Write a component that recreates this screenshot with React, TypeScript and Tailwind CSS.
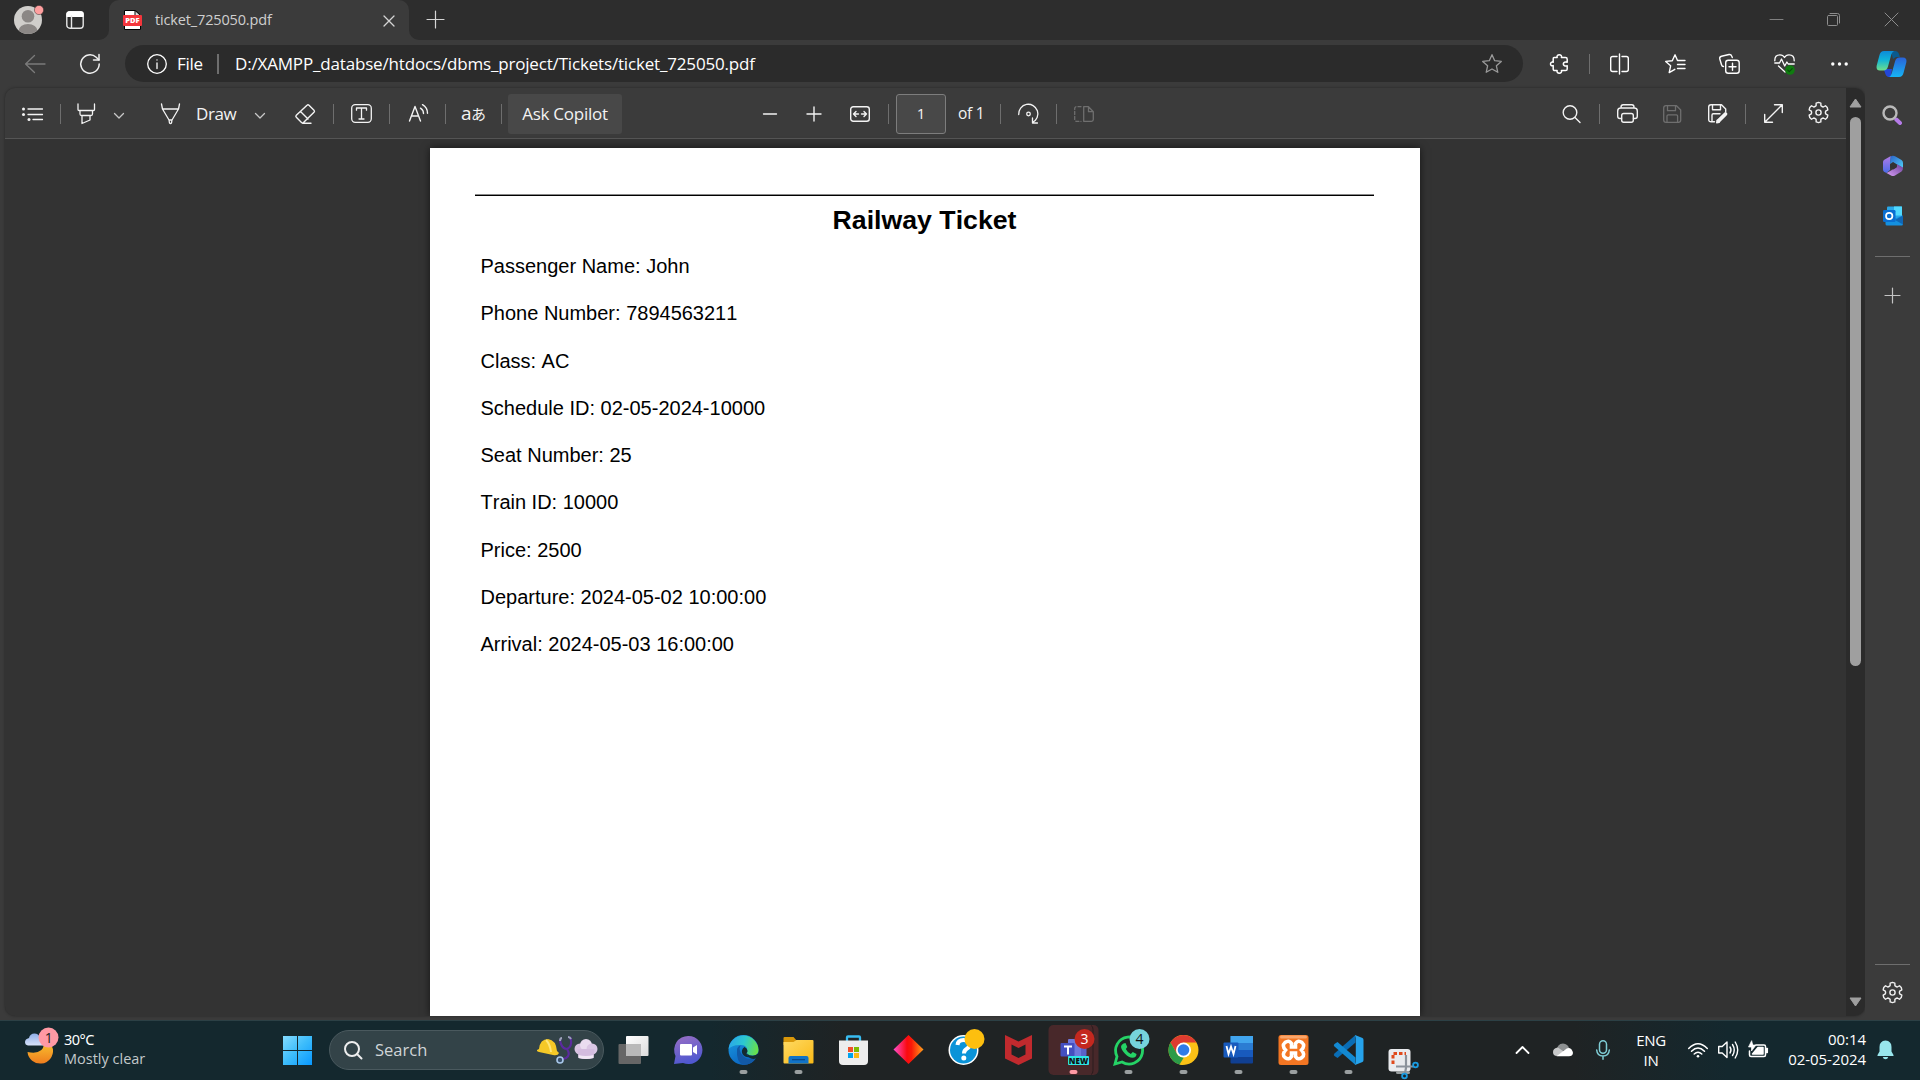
import type { ReactNode } from "react";

type IconProps = { w: number; h: number; className?: string; sw?: number; children: ReactNode };

/** Line icon whose view box is the same size as its box on the page. */
function Icon({ w, h, className = "", sw = 1.3, children }: IconProps) {
  return (
    <svg
      width={w}
      height={h}
      viewBox={`0 0 ${w} ${h}`}
      fill="none"
      stroke="currentColor"
      strokeWidth={sw}
      strokeLinecap="round"
      strokeLinejoin="round"
      className={`block shrink-0 overflow-visible ${className}`}
    >
      {children}
    </svg>
  );
}

function gearPath(c: number) {
  const pts: string[] = [];
  for (let k = 0; k < 6; k++) {
    const base = (k * 60 - 90) * (Math.PI / 180);
    const steps: [number, number][] = [
      [-19, 7.3],
      [-14, 9.7],
      [0, 10.1],
      [14, 9.7],
      [19, 7.3],
      [30, 6.9],
    ];
    for (const [deg, r] of steps) {
      const a = base + (deg * Math.PI) / 180;
      pts.push(`${(c + r * Math.cos(a)).toFixed(2)} ${(c + r * Math.sin(a)).toFixed(2)}`);
    }
  }
  return `M${pts.join("L")}Z`;
}

function Gear({ className = "" }: { className?: string }) {
  return (
    <Icon w={21} h={21} className={className} sw={1.4}>
      <path d={gearPath(10.5)} />
      <circle cx="10.5" cy="10.5" r="2.6" />
    </Icon>
  );
}

function Sep({ className }: { className: string }) {
  return <div className={`h-5 w-px shrink-0 bg-[#6e6e6e] ${className}`} />;
}

function TitleBar() {
  return (
    <div className="flex h-10 w-full items-center bg-[#2d2d2d]">
      <svg width="32" height="32" viewBox="0 0 32 32" className="ml-3.5 shrink-0">
        <defs>
          <clipPath id="avatar">
            <circle cx="14" cy="16" r="14" />
          </clipPath>
        </defs>
        <circle cx="14" cy="16" r="14" fill="#d0cecb" />
        <g clipPath="url(#avatar)" fill="#8b8785">
          <circle cx="14" cy="12.3" r="6.3" />
          <ellipse cx="14" cy="27" rx="9.5" ry="7" />
        </g>
        <circle cx="25" cy="6" r="4.6" fill="#ff9f9f" stroke="#3a3030" strokeWidth="0.5" />
      </svg>
      <Icon w={18} h={18} className="ml-5 text-[#e6e6e6]" sw={1.4}>
        <rect x="0.8" y="0.8" width="16.4" height="16.4" rx="3" />
        <path d="M1 4V3a2 2 0 0 1 2-2h12a2 2 0 0 1 2 2v2.2H1z" fill="#fff" stroke="#fff" />
        <path d="M5.5 5v12" />
      </Icon>
      <div className="ml-[15px] flex h-10 w-[320px] shrink-0 items-end">
        <div className="h-2.5 w-2.5 bg-[#3b3b3b]">
          <div className="h-full w-full rounded-br-[10px] bg-[#2d2d2d]" />
        </div>
        <div className="flex h-10 w-[300px] items-center rounded-t-[10px] bg-[#3b3b3b]">
          <svg width="19" height="20" viewBox="0 0 19 20" className="ml-3.5 shrink-0">
            <path d="M1.5 0.5h11l5 4.5v14.5h-16z" fill="#fff" stroke="#000" />
            <path d="M12 0.5v5h5.5z" fill="#ddd" stroke="#000" />
            <rect x="0" y="5" width="19" height="11" rx="1" fill="#f4353b" />
            <text x="9.5" y="13.3" textAnchor="middle" fontFamily="Open Sans, sans-serif" fontWeight="800" fontSize="7.500" fill="#fff">
              PDF
            </text>
          </svg>
          <span className="ml-[13px] w-[229px] whitespace-nowrap text-[14.5px] leading-5 tracking-[-0.15px] text-[#cfcfcf]">ticket_725050.pdf</span>
          <Icon w={10} h={10} className="mt-px text-[#d5d5d5]">
            <path d="M0 0l10 10M10 0L0 10" />
          </Icon>
        </div>
        <div className="h-2.5 w-2.5 bg-[#3b3b3b]">
          <div className="h-full w-full rounded-bl-[10px] bg-[#2d2d2d]" />
        </div>
      </div>
      <Icon w={17} h={17} className="mb-px ml-2 text-[#d5d5d5]" sw={1.2}>
        <path d="M8.500 0v17M0 8.500h17" />
      </Icon>
      <Icon w={13} h={13} className="mb-px ml-auto text-[#808080]" sw={1}>
        <path d="M0 6.500h13" />
      </Icon>
      <Icon w={13} h={13} className="mb-px ml-11 text-[#8d8d8d]" sw={1}>
        <rect x="0.5" y="2.5" width="10" height="10" rx="1" />
        <path d="M3 0.500h7.500a2 2 0 0 1 2 2V10" />
      </Icon>
      <Icon w={13} h={13} className="mr-[22px] mb-px ml-[45px] text-[#8d8d8d]" sw={1}>
        <path d="M0 0l13 13M13 0L0 13" />
      </Icon>
    </div>
  );
}

function CopilotLogo() {
  return (
    <svg width="31" height="28" viewBox="0 0 31 28" className="ml-7 block shrink-0">
      <defs>
        <linearGradient id="cpA" x1="0" y1="0" x2="0" y2="1">
          <stop offset="0" stopColor="#0d8bd8" />
          <stop offset="0.45" stopColor="#10b3d8" />
          <stop offset="1" stopColor="#6fe08a" />
        </linearGradient>
        <linearGradient id="cpB" x1="0" y1="0" x2="0" y2="1">
          <stop offset="0" stopColor="#2a62d8" />
          <stop offset="1" stopColor="#16b4f4" />
        </linearGradient>
      </defs>
      <path d="M15 1h4.500q2.500 0 3.300 2.600L24 7h-4l-3 2z" fill="#0a5a8f" />
      <path d="M7 19h9l-1 8h-1.500q-3 0-4-2.800L8 20z" fill="#2347d8" />
      <path d="M8 1h10q-2 1-2.700 3.500L12 16.500q-1 4-4.500 4H4Q0 20.500 0.600 16L3.500 5Q4.500 1 8 1z" fill="url(#cpA)" />
      <path d="M23 27H13q2-1 2.700-3.500L19 11.500q1-4 4.500-4H27q4 0 3.400 4.500L27.500 23q-1 4-4.500 4z" fill="url(#cpB)" />
    </svg>
  );
}

function AddressBar() {
  return (
    <div className="flex h-12 w-full items-center bg-[#3b3b3b] text-white">
      <Icon w={20} h={18} className="mb-px ml-[25px] text-[#7b7b7b]">
        <path d="M20 9H0.600M9.500 0.500L0.600 9l8.900 8.500" />
      </Icon>
      <Icon w={20} h={20} className="ml-[35px] text-[#f0f0f0]" sw={1.5}>
        <path d="M19.200 10a9.200 9.200 0 1 1-3-6.800L19 6" />
        <path d="M19 0.600V6h-5.500" />
      </Icon>
      <div className="mb-px ml-[25px] flex h-[37px] w-[1398px] shrink-0 items-center rounded-full bg-[#2b2b2b]">
        <Icon w={20} h={20} className="ml-[22px]">
          <circle cx="10" cy="10" r="9.300" />
          <path d="M10 9v5.500M10 5.800v0.300" />
        </Icon>
        <span className="ml-[10px] w-[29px] whitespace-nowrap text-[17px] leading-6 tracking-[-0.3px]">File</span>
        <div className="ml-[11px] h-5 w-0.5 bg-[#6e6e6e]" />
        <span className="ml-4 flex-1 whitespace-nowrap text-[17px] leading-6 tracking-[-0.17px]">
          D:/XAMPP_databse/htdocs/dbms_project/Tickets/ticket_725050.pdf
        </span>
        <Icon w={20} h={20} className="mr-[21px] text-[#9a9a9a]">
          <path d="M10 0.700l2.700 6 6.600 0.700-4.900 4.400 1.400 6.500-5.800-3.300-5.800 3.300 1.400-6.500L0.700 7.400l6.600-0.700z" />
        </Icon>
      </div>
      <Icon w={20} h={20} className="ml-[27px]" sw={1.5}>
        <path d="M4 3.500h3.200C6.500 1.800 7.800 0.700 9.300 0.700s2.800 1.100 2.100 2.800h4.100q1.700 0 1.700 1.700v3c-2-0.600-3.900 0.200-3.900 1.800s1.900 2.400 3.900 1.800v3.100q0 1.700-1.700 1.700h-4.100c0.700 1.700-0.600 2.700-2.100 2.700s-2.800-1-2.100-2.700H4.900q-1.700 0-1.700-1.700v-3.300C1.700 12.300 0.500 11.400 0.500 10s1.200-2.300 2.700-1.800V4.800Q3.200 3.500 4 3.500z" />
      </Icon>
      <Sep className="ml-[19px]" />
      <Icon w={19} h={20} className="ml-5" sw={1.4}>
        <path d="M9.500 0v20M7 2.500H2.700q-2 0-2 2v11q0 2 2 2H7M12 2.500h4.300q2 0 2 2v11q0 2-2 2H12" />
      </Icon>
      <Icon w={21} h={20} className="ml-9" sw={1.4}>
        <path d="M12.500 6.500L10 0.800 7.300 6.700 0.700 7.400l4.900 4.400-1.400 6.800 5.600-3.300M12.500 6.500H20M12.500 10.500H20M12.500 14.500H20" />
      </Icon>
      <Icon w={21} h={20} className="ml-[33px]" sw={1.4}>
        <path d="M4.500 12.500Q3 12.500 2.500 10.700L0.800 5Q0.300 2.800 2.500 2.200L10 0.500q2-0.400 2.700 1.500l0.600 1.500" />
        <rect x="6.700" y="6.300" width="13.500" height="13" rx="2.500" />
        <path d="M13.500 9.300v7M10 12.800h7" />
      </Icon>
      <Icon w={21} h={21} className="mt-px ml-[34px]" sw={1.3}>
        <path d="M0.800 6.800Q0.600 0.800 6 0.800q3 0 4.500 2.700Q12 0.800 15 0.800q5.300 0 5.200 6M0.800 9h4.700l2-4 3.200 7 2.200-4 1.300 2h6M4.500 12l6.500 6" />
        <circle cx="16" cy="16" r="4.800" fill="#107c10" stroke="none" />
        <path d="M13.800 16.200l1.500 1.500 2.900-3" stroke="#0a4d0a" strokeWidth="1.200" />
      </Icon>
      <Icon w={17} h={4} className="ml-9" sw={0}>
        <g fill="#fff">
          <circle cx="1.800" cy="2" r="1.700" />
          <circle cx="8.500" cy="2" r="1.700" />
          <circle cx="15.200" cy="2" r="1.700" />
        </g>
      </Icon>
      <CopilotLogo />
    </div>
  );
}

function Chevron({ className }: { className: string }) {
  return (
    <Icon w={10} h={6} className={`mt-1 text-[#c8c8c8] ${className}`}>
      <path d="M0.500 0.500L5 5l4.500-4.500" />
    </Icon>
  );
}

function PdfToolbar() {
  return (
    <div className="flex h-[51px] w-full items-center border-b border-[#555] bg-[#3b3b3b] pt-px text-[17px] text-[#f3f3f3]">
      <Icon w={21} h={14} className="ml-[17px]">
        <path d="M6 2h14.500M6 7.500h14.500M11 12.500h9.500" />
        <g fill="currentColor" stroke="none">
          <circle cx="1.500" cy="2" r="1.500" />
          <circle cx="1.500" cy="7.500" r="1.500" />
          <circle cx="7" cy="12.500" r="1.500" />
        </g>
      </Icon>
      <Sep className="ml-[17px]" />
      <Icon w={19} h={20} className="ml-4">
        <path d="M1 0v5.500q0 1 1 1h14.500q1 0 1-1V0M3 6.500v3.500q0 1.500 1.500 1.500h9.500q1.500 0 1.500-1.500V6.500M5 11.500v8l8-3.500v-4.500" />
      </Icon>
      <Chevron className="ml-[18px]" />
      <Icon w={19} h={20} className="ml-[37px]">
        <path d="M0.500 0l1 5h16l1-5M1.500 5l6.500 11h3l6.500-11M8 16l0.500 3q1 1 2 0l0.500-3" />
      </Icon>
      <span className="ml-4 w-10 whitespace-nowrap tracking-[-0.4px]">Draw</span>
      <Chevron className="ml-[19px]" />
      <Icon w={21} h={20} className="ml-[30px]" sw={1.4}>
        <path d="M12 1.200q1-1 2 0l5 5q1 1 0 2L8.500 18.500q-1 1-2 0L1.300 13.300q-1-1 0-2zM5.500 7.500l7.500 7.500M7.500 19.300H16" />
      </Icon>
      <Sep className="ml-[17px]" />
      <Icon w={21} h={19} className="ml-[17px]">
        <rect x="0.700" y="0.700" width="19.600" height="17.600" rx="3.500" />
        <path d="M5.500 6.200V4h10v2.200M10.500 4v11M8 15h5" />
      </Icon>
      <Sep className="ml-[17px]" />
      <Icon w={19} h={19} className="ml-[19px]" sw={1.4}>
        <path d="M0.500 17L6 2.500 11.500 17M2.500 12h7M11.500 4.200q3 2 3 5.300M13.500 0.700q5 3 5 8.500" />
      </Icon>
      <Sep className="ml-[17px]" />
      <span className="ml-[15px] w-6 whitespace-nowrap font-['Open_Sans','Noto_Sans_CJK_JP',sans-serif] text-[19px] leading-5 tracking-[-0.6px]">
        a<span className="text-[15px]">あ</span>
      </span>
      <Sep className="ml-4" />
      <button className="ml-1.5 h-10 w-[114px] shrink-0 rounded-[3px] bg-[#484848] text-center whitespace-nowrap tracking-[-0.25px]">Ask Copilot</button>
      <Icon w={14} h={14} className="ml-[141px]">
        <path d="M0.500 7h13" />
      </Icon>
      <Icon w={14} h={14} className="ml-[30px]" sw={1.4}>
        <path d="M0 7h14M7 0v14" />
      </Icon>
      <Icon w={20} h={16} className="ml-[29px]" sw={1.4}>
        <rect x="0.700" y="0.700" width="18.600" height="14.600" rx="2.500" />
        <path d="M8.500 8H3.500M6 5.500L3.500 8 6 10.500M11.500 8h5M14 5.500L16.500 8 14 10.500" />
      </Icon>
      <Sep className="ml-[18px]" />
      <div className="ml-[7px] flex h-10 w-[50px] shrink-0 items-center justify-center rounded-[3px] border border-[#7d7d7d] bg-[#484848] text-[15px]">1</div>
      <span className="ml-3 w-7 whitespace-nowrap text-[15.5px] tracking-[-0.3px]">of 1</span>
      <Sep className="ml-3.5" />
      <Icon w={21} h={20} className="ml-[17px]">
        <path d="M0.700 10.500A9.600 9.600 0 1 1 14.500 18.500M14.500 14v5h5" />
        <circle cx="10.500" cy="10" r="1.800" />
      </Icon>
      <Sep className="ml-[17px]" />
      <Icon w={20} h={16} className="ml-[17px] text-[#6f6f6f]">
        <path d="M7 0.700H2.500q-1.800 0-1.800 1.800v11q0 1.800 1.800 1.800H7" strokeDasharray="3 2" />
        <path d="M9.700 0.700h4.800l4.800 5v7.800q0 1.800-1.800 1.800H9.700zM14.500 0.700v5h4.800" />
      </Icon>
      <Icon w={19} h={18} className="ml-auto" sw={1.4}>
        <circle cx="8" cy="7.500" r="6.800" />
        <path d="M13 12.500l5 5" />
      </Icon>
      <Sep className="ml-[18px]" />
      <Icon w={21} h={19} className="ml-[17px]" sw={1.4}>
        <path d="M4 4V3q0-2.200 2.200-2.200h8.600Q17 0.800 17 3v1M4.500 14.500H3q-2.300 0-2.300-2.300V7q0-3 3-3h13.600q3 0 3 3v5.200q0 2.300-2.300 2.300h-1.500" />
        <rect x="4.700" y="9.500" width="11.600" height="8.800" rx="2" />
      </Icon>
      <Icon w={19} h={18} className="ml-[25px] text-[#6f6f6f]">
        <path d="M3 0.700h10.500L17.700 5v10q0 2.300-2.300 2.300H3Q0.700 17.300 0.700 15V3Q0.700 0.700 3 0.700zM4.500 0.700v5h8v-5M4 17V11q0-1.200 1.200-1.200h8.200q1.200 0 1.200 1.200v6" />
      </Icon>
      <Icon w={20} h={19} className="ml-[26px]" sw={1.4}>
        <path d="M6.500 17.800H3.200Q0.700 17.800 0.700 15.500V3Q0.700 0.700 3 0.700h10.500L17.700 5v2.500M4.500 0.700v5h8v-5M4 17.500V11q0-1.200 1.200-1.200H12" />
        <path d="M10.500 16.800l7-6.800" strokeWidth="3.800" />
        <path d="M8.700 18.700l0.500-2.500 2 2z" fill="currentColor" />
      </Icon>
      <Sep className="ml-[17px]" />
      <Icon w={19} h={19} className="ml-[18px]" sw={1.4}>
        <path d="M1 18L18 1M10.500 0.700H18.300V8.500M0.700 10.500v7.800H8.500" />
      </Icon>
      <Gear className="mr-[17px] mb-0.5 ml-[25px]" />
    </div>
  );
}

const details = [
  "Passenger Name: John",
  "Phone Number: 7894563211",
  "Class: AC",
  "Schedule ID: 02-05-2024-10000",
  "Seat Number: 25",
  "Train ID: 10000",
  "Price: 2500",
  "Departure: 2024-05-02 10:00:00",
  "Arrival: 2024-05-03 16:00:00",
];

function TicketPage() {
  return (
    <div className="mt-[9px] ml-[425px] h-[868px] w-[990px] shrink-0 bg-white pt-[46px] pr-[46px] pl-[45px] font-['Liberation_Sans',Arial,sans-serif] text-black shadow-[0_0_8px_rgba(0,0,0,0.6)] [font-kerning:none]">
      <div className="h-[2px] border-t border-b border-t-[#888] border-b-black" />
      <h1 className="h-[47px] pt-px text-center text-[26.7px] leading-[47px] font-bold">Railway Ticket</h1>
      {details.map((line) => (
        <p key={line} className="h-[47.25px] pl-[5.5px] text-[20px] leading-[47.25px] whitespace-nowrap">
          {line}
        </p>
      ))}
    </div>
  );
}

function Sidebar() {
  return (
    <aside className="flex h-full w-[55px] flex-col items-center bg-[#3b3b3b] pr-px">
      <svg width="20" height="20" viewBox="0 0 20 20" className="mt-[17px] shrink-0">
        <path d="M14.300 14.500l3.700 3.500" stroke="#b57be8" strokeWidth="4" strokeLinecap="round" />
        <circle cx="8" cy="8" r="6.500" fill="none" stroke="#b9b9b9" strokeWidth="2.400" />
      </svg>
      <svg width="22" height="22" viewBox="0 0 22 22" className="mt-[30px] ml-[2px] shrink-0">
        <defs>
          <linearGradient id="mA" x1="0" y1="0" x2="0" y2="1">
            <stop offset="0" stopColor="#b07be6" />
            <stop offset="1" stopColor="#4a6be8" />
          </linearGradient>
          <linearGradient id="mB" x1="0" y1="0" x2="1" y2="1">
            <stop offset="0" stopColor="#2b62c8" />
            <stop offset="1" stopColor="#4fd0f8" />
          </linearGradient>
          <linearGradient id="mC" x1="0" y1="1" x2="1" y2="0">
            <stop offset="0" stopColor="#d9a0f5" />
            <stop offset="1" stopColor="#6b3f9b" />
          </linearGradient>
        </defs>
        <path d="M8 1.500Q9.500 0.800 8.800 3L8 8v7l-3.500 3-2.500-1.300Q1 16 1 14.500V7q0-1.500 1.300-2.200z" fill="url(#mA)" />
        <path d="M8.500 1.500Q11 0 13.500 1.500L19.500 5Q21 6 21 8v5l-6-3.500L11 7 8 9z" fill="url(#mB)" />
        <path d="M21 12.500q0 3-1.500 4L13 20.500q-2 1.200-4 0L4.500 18l4.500-2.500 6-3.700V9.300z" fill="url(#mC)" />
        <path d="M11.300 7.600l3.300 1.900v3l-3.300 2-3-1.700V9.400z" fill="#333" />
      </svg>
      <svg width="20" height="20" viewBox="0 0 20 20" className="mt-[29px] ml-[2px] shrink-0">
        <rect x="4" y="0.500" width="15" height="13" rx="1" fill="#28a8ea" />
        <rect x="11" y="0.500" width="8" height="9" fill="#50d9ff" />
        <path d="M2.500 12h11L20 9.500V18q0 1.500-1.500 1.500H4q-1.500 0-1.500-1.500z" fill="#1490df" />
        <path d="M12 14l8-4.500v9z" fill="#1066b5" />
        <rect x="0" y="4" width="12.500" height="12" rx="1.200" fill="#0a6ed1" />
        <circle cx="6.200" cy="10" r="3.200" fill="none" stroke="#fff" strokeWidth="1.700" />
      </svg>
      <div className="mt-[30px] h-px w-[35px] shrink-0 bg-[#6e6e6e]" />
      <Icon w={15} h={15} className="mt-[31px] text-[#c4c4c4]" sw={1.2}>
        <path d="M7.500 0v15M0 7.500h15" />
      </Icon>
      <div className="mt-auto h-px w-[35px] shrink-0 bg-[#6e6e6e]" />
      <Gear className="mt-[17px] mb-[17px] ml-px text-[#f0f0f0]" />
    </aside>
  );
}

function Scrollbar() {
  return (
    <div className="flex h-[928px] w-[19px] flex-col items-center rounded-r-[10px] bg-[#2b2b2b]">
      <svg width="13" height="10" viewBox="0 0 13 10" className="mt-2.5 shrink-0">
        <path d="M6.500 1L12 9H1z" fill="#9f9f9f" stroke="#9f9f9f" strokeLinejoin="round" />
      </svg>
      <div className="mt-[9px] h-[549px] w-[11px] shrink-0 rounded-full bg-[#9f9f9f]" />
      <svg width="13" height="10" viewBox="0 0 13 10" className="mt-auto mb-[9px] shrink-0">
        <path d="M6.500 9L12 1H1z" fill="#9f9f9f" stroke="#9f9f9f" strokeLinejoin="round" />
      </svg>
    </div>
  );
}

/** One 55x60 taskbar slot; drawings inside use the slot's own coordinates. */
function TaskSlot({ running = false, children }: { running?: boolean; children: ReactNode }) {
  return (
    <svg width="55" height="60" viewBox="0 0 55 60" className="block shrink-0 overflow-visible">
      {children}
      {running && <rect x="23.500" y="50" width="8" height="4" rx="2" fill="#9a9fa0" />}
    </svg>
  );
}

function TaskbarApps() {
  return (
    <>
      <TaskSlot>
        <defs>
          <linearGradient id="tv" x1="0" y1="0" x2="1" y2="1">
            <stop offset="0" stopColor="#fff" />
            <stop offset="1" stopColor="#dcdcdc" />
          </linearGradient>
        </defs>
        <rect x="20" y="16" width="22.500" height="20" rx="1" fill="url(#tv)" />
        <rect x="12.500" y="24" width="22.500" height="20" rx="1" fill="#666" />
        <rect x="20" y="24" width="15" height="12" fill="#b9b9b9" />
      </TaskSlot>
      <TaskSlot>
        <defs>
          <linearGradient id="chat" x1="0" y1="0" x2="0.300" y2="1">
            <stop offset="0" stopColor="#9a6fc4" />
            <stop offset="1" stopColor="#5058d0" />
          </linearGradient>
        </defs>
        <path d="M27.500 16A14 14 0 1 1 22 42.900L13 44l1.500-8A14 14 0 0 1 27.500 16z" fill="url(#chat)" />
        <rect x="19" y="24" width="12" height="11.500" rx="1" fill="#fff" />
        <path d="M32 27.500l4-2.500v9.500l-4-2.500z" fill="#fff" />
      </TaskSlot>
      <TaskSlot running>
        <defs>
          <linearGradient id="edA" x1="0" y1="0.300" x2="1" y2="0.500">
            <stop offset="0" stopColor="#2aa6ea" />
            <stop offset="0.500" stopColor="#2cc8d0" />
            <stop offset="1" stopColor="#68e04a" />
          </linearGradient>
          <linearGradient id="edB" x1="0" y1="0" x2="0.600" y2="1">
            <stop offset="0" stopColor="#1b9de2" />
            <stop offset="1" stopColor="#0a62c0" />
          </linearGradient>
        </defs>
        <circle cx="27.500" cy="30" r="15" fill="url(#edB)" />
        <path d="M12.600 29A15 15 0 0 1 42.500 30q0 5.500-6 5.500c-4 0-6-1.500-5.500-3 1-2.500 0-7.500-6-7.500-5 0-9 0.500-12.400 4z" fill="url(#edA)" />
        <path d="M21 30q0-3 3.500-4.500-2 4 1 8.500 3.500 5.500 9.500 5 3 0 5-1.500Q36 45 27.500 45 20 42 21 30z" fill="#1259a6" />
        <path d="M28.500 27q3 1.500 3 4 0 1.500-1 2 0 2.500 4 4-5 1-8-3-2-4 2-7z" fill="#142a30" />
        <path d="M31 33.500q2 2.500 6 2.300 3-0.200 5-2.300l1.500 1-3 4q-8 2-9.500-5z" fill="#142a30" />
      </TaskSlot>
      <TaskSlot running>
        <defs>
          <linearGradient id="fold" x1="0" y1="0" x2="1" y2="1">
            <stop offset="0" stopColor="#ffda63" />
            <stop offset="1" stopColor="#f9b916" />
          </linearGradient>
        </defs>
        <path d="M12.500 18q0-1 1-1h9l3.500 4v4H12.500z" fill="#d9980a" />
        <path d="M12.500 22h10l3-2H41.500q1 0 1 1v21.500q0 1-1 1h-28q-1 0-1-1z" fill="url(#fold)" />
        <path d="M17.500 43.500V38q0-2 2-2h16q2 0 2 2v5.500z" fill="#1173c7" />
        <rect x="21" y="39" width="13" height="1.300" fill="#0a4a8c" />
      </TaskSlot>
      <TaskSlot>
        <path d="M21 22v-4.500q0-1 1-1h11q1 0 1 1V22" fill="none" stroke="#38bdf2" strokeWidth="2.300" />
        <path d="M13 20.500h29V41q0 4-4 4H17q-4 0-4-4z" fill="#ededed" />
        <rect x="22" y="27" width="5" height="5" fill="#f0502a" />
        <rect x="28" y="27" width="5" height="5" fill="#7fba00" />
        <rect x="22" y="33" width="5" height="5" fill="#00a3ee" />
        <rect x="28" y="33" width="5" height="5" fill="#fdb913" />
      </TaskSlot>
      <TaskSlot>
        <defs>
          <linearGradient id="dia">
            <stop offset="0" stopColor="#ff4fd0" />
            <stop offset="0.450" stopColor="#fa0a10" />
            <stop offset="0.600" stopColor="#fa1a08" />
            <stop offset="1" stopColor="#ffa01c" />
          </linearGradient>
        </defs>
        <path d="M27.500 15L42.500 29.500 27.500 44 12.500 29.500z" fill="url(#dia)" />
      </TaskSlot>
      <TaskSlot>
        <circle cx="27.500" cy="30" r="15" fill="#fff" />
        <circle cx="27.500" cy="30" r="13.500" fill="#0a93d8" />
        <path d="M21.500 25q0.500-5 6-5t6 4.500q0 3-3 4.500-2.500 1.500-2.500 4.500" fill="none" stroke="#fff" strokeWidth="4" />
        <circle cx="27.800" cy="38" r="2.500" fill="#fff" />
        <circle cx="38.500" cy="19" r="10" fill="#fdbf0f" />
      </TaskSlot>
      <TaskSlot>
        <path d="M14 15l13.500 6.500L41 15v23.500L27.500 45 14 38.500zM20.500 24.500v10l7 3.500 7-3.500v-10L27.500 28z" fill="#c12a2e" fillRule="evenodd" />
      </TaskSlot>
      <TaskSlot>
        <rect x="2.500" y="5" width="50" height="50" rx="5" fill="#48282a" />
        <path d="M45 5.500q2 0.500 2 4v41q0 3.500-2 4" fill="none" stroke="#2b1c1e" />
        <rect x="30" y="20" width="10.500" height="16" rx="1" fill="#5a62c8" />
        <rect x="22" y="19" width="13" height="18" rx="1" fill="#6f78dc" />
        <rect x="14.500" y="23" width="14" height="13.500" rx="1" fill="#444fc0" />
        <path d="M18 26.500h8M22 26.500v8" stroke="#fff" strokeWidth="2" />
        <circle cx="38.500" cy="19" r="10" fill="#c4281f" />
        <text x="38.500" y="24" textAnchor="middle" fontSize="14" fontFamily="Open Sans, sans-serif" fill="#fff">3</text>
        <rect x="22" y="36" width="21" height="9" rx="1" fill="#2ee6e6" />
        <text x="32.500" y="43.500" textAnchor="middle" fontSize="8" fontWeight="800" fontFamily="Open Sans, sans-serif" fill="#111">NEW</text>
        <rect x="23.500" y="50" width="8" height="4" rx="2" fill="#ff99a4" />
      </TaskSlot>
      <TaskSlot running>
        <path d="M14 44l2-7.500A13.500 13.500 0 1 1 21 42z" fill="none" stroke="#25d366" strokeWidth="2.800" />
        <path d="M22.500 23.500l2-0.500 1.800 4-1.500 2q1.700 3.500 5 5l2-2 3.700 1.900q0 3.500-4 3.900-3.700 0-7.500-4t-4-7q0-2 2.500-3.300z" fill="#25d366" />
        <circle cx="38.500" cy="19" r="10" fill="#76d3dc" />
        <text x="38.500" y="24" textAnchor="middle" fontSize="14" fontFamily="Open Sans, sans-serif" fill="#111">4</text>
      </TaskSlot>
      <TaskSlot running>
        <circle cx="27.500" cy="30" r="15" fill="#fbc116" />
        <path d="M14.500 22.500A15 15 0 0 1 40.500 22.500H27.500L21 33.700z" fill="#de3b30" />
        <path d="M14.500 22.500L21 33.700q2.500 4 8 3.700L27.500 45A15 15 0 0 1 14.500 22.500z" fill="#2b9b48" />
        <path d="M34 33.700L27.500 45q-2 0-4-0.600L30 34z" fill="#fbc116" />
        <circle cx="27.500" cy="30" r="7.500" fill="#fff" />
        <circle cx="27.500" cy="30" r="5.800" fill="#2f7be8" />
      </TaskSlot>
      <TaskSlot running>
        <rect x="19.500" y="16" width="22.500" height="27.500" rx="1" fill="#103f91" />
        <rect x="19.500" y="16" width="22.500" height="7" fill="#41a5ee" />
        <rect x="19.500" y="23" width="22.500" height="7" fill="#2b7cd3" />
        <rect x="19.500" y="30" width="22.500" height="7" fill="#185abd" />
        <rect x="12.500" y="22.500" width="15" height="15" rx="1" fill="#185abd" />
        <path d="M15.500 26l2 8 2.500-7.500 2.500 7.500 2-8" fill="none" stroke="#fff" strokeWidth="1.800" />
      </TaskSlot>
      <TaskSlot running>
        <rect x="12.500" y="15" width="30" height="30" rx="2.500" fill="#f37623" />
        <rect x="14" y="15.500" width="27" height="3" rx="1.500" fill="#f9a66c" />
        <path d="M19 22.500q4-3 6.500 1v3.500h4v-3.500q2.500-4 6.500-1 3.500 3-0.500 7.500 4 4.500 0.500 7.500-4 3-6.500-1V33h-4v3.500q-2.500 4-6.500 1-3.500-3 0.500-7.500-4-4.500-0.500-7.500z" fill="none" stroke="#fff" strokeWidth="3.600" />
      </TaskSlot>
      <TaskSlot running>
        <path d="M34.500 15v7.500L16.500 38l-3-2q-1.500-1 0-2.500z" fill="#0a6db5" />
        <path d="M34.500 45v-7.500L16.500 22l-3 2q-1.500 1 0 2.500z" fill="#1389d2" />
        <path d="M34 15l7.500 3q1 0.500 1 2v20q0 1.500-1 2L34 45l0.800-3V18z" fill="#26a3ec" />
      </TaskSlot>
      <TaskSlot>
        <rect x="12.500" y="29" width="22" height="22.500" rx="3" fill="#e9ebee" />
        <path d="M17 44V33.500H30" fill="none" stroke="#e04a1c" strokeWidth="3" strokeDasharray="3.500 2" />
        <rect x="20" y="51" width="14" height="3" rx="1.500" fill="#9a9fa0" />
        <path d="M30 35v13.500M20 46.500h17M30 48l-1 5" stroke="#8b929b" strokeWidth="2.200" />
        <circle cx="28.500" cy="56" r="2.400" fill="none" stroke="#1a9be0" strokeWidth="1.800" />
        <circle cx="39.500" cy="45" r="2.400" fill="none" stroke="#1a9be0" strokeWidth="1.800" />
      </TaskSlot>
    </>
  );
}

function SearchArt() {
  return (
    <svg width="62" height="30" viewBox="0 0 62 30" className="mr-1 block shrink-0">
      <path d="M2 14Q3 4 11 4q8 1 9 12l2 2q-1 3-6 2L2 17q-3-1-2-2z" fill="#f5c927" />
      <path d="M9 5q4 4 5 12" stroke="#ffe676" strokeWidth="2" fill="none" />
      <path d="M25 3q-3 1-1 6t6 5q5-2 4-9 0-3-3-3M30 14q4 6-1 9-2 1-4 1" fill="none" stroke="#5b2a9e" strokeWidth="2.200" />
      <path d="M25 3q-2 0-2 3M31 2q2 0 3 2" stroke="#9aa5b5" strokeWidth="2" fill="none" />
      <circle cx="23" cy="25" r="3" fill="#39506b" stroke="#a9c8ea" strokeWidth="1.600" />
      <circle cx="43" cy="14" r="5.500" fill="#d9c3e2" />
      <circle cx="49" cy="10" r="6" fill="#eadcf0" />
      <circle cx="55" cy="14" r="5.500" fill="#dac6e4" />
      <path d="M40.500 14h17l-1 9q-7.500 2-15 0z" fill="#d4bcdf" />
      <path d="M41.500 20q7.500 2 15 0v3q-7.500 2-15 0z" fill="#f1e7f5" />
    </svg>
  );
}

function Taskbar() {
  return (
    <footer className="flex h-[60px] w-full items-center bg-[linear-gradient(90deg,#14282e_0%,#14282e_37%,#1f2324_44%,#1f2324_82%,#14282e_90%,#14282e_100%)] text-[15px] text-white shadow-[inset_0_1px_0_#2c4045]">
      <svg width="36" height="40" viewBox="0 0 36 40" className="ml-[24px] shrink-0 overflow-visible">
        <defs>
          <linearGradient id="moon" x1="0" y1="0" x2="0" y2="1">
            <stop offset="0" stopColor="#f8bd2e" />
            <stop offset="1" stopColor="#ef7d1e" />
          </linearGradient>
          <linearGradient id="cloud" x1="0" y1="0" x2="0" y2="1">
            <stop offset="0" stopColor="#8faee8" />
            <stop offset="1" stopColor="#d7e2fa" />
          </linearGradient>
        </defs>
        <path d="M20 14q9 1 9 5.500A12.500 12.500 0 0 1 3.500 22Q19 25 20 14z" fill="url(#moon)" />
        <path d="M4 15.500q-3-0.500-3-3.500t4-4q1-4.500 5.500-4.500 4 0 5.500 4h3v8z" fill="url(#cloud)" />
        <circle cx="24.500" cy="7.500" r="10" fill="#ff99a4" />
        <text x="24.800" y="12.500" textAnchor="middle" fontSize="14" fontFamily="Open Sans, sans-serif" fill="#222">1</text>
      </svg>
      <div className="mb-0.5 ml-1 w-[90px] leading-5 whitespace-nowrap">
        <div className="font-['Noto_Sans','Open_Sans',sans-serif] text-[14.5px] tracking-[-0.5px]">30°C</div>
        <div className="text-[14.5px] text-[#c3c9cb]">Mostly clear</div>
      </div>
      <svg width="29" height="29" viewBox="0 0 29 29" className="ml-[129px] shrink-0">
        <defs>
          <linearGradient id="win" x1="0" y1="0" x2="29" y2="29" gradientUnits="userSpaceOnUse">
            <stop offset="0" stopColor="#84dcff" />
            <stop offset="0.500" stopColor="#3cbcfb" />
            <stop offset="1" stopColor="#0898ff" />
          </linearGradient>
        </defs>
        <path d="M0 0h14v14H0zM15 0h14v14H15zM0 15h14v14H0zM15 15h14v14H15z" fill="url(#win)" />
      </svg>
      <div className="ml-[17px] flex h-10 w-[275px] shrink-0 items-center rounded-full border border-[#4a595e] bg-[#334348]">
        <Icon w={18} h={18} className="ml-3.5 text-[#eee]" sw={2}>
          <circle cx="8" cy="8" r="7" />
          <path d="M13 13l4.500 4.500" />
        </Icon>
        <span className="ml-[13px] flex-1 text-[16.5px] text-[#d0d5d7]">Search</span>
        <SearchArt />
      </div>
      <div className="ml-0.5 flex h-[60px] w-[825px] shrink-0">
        <TaskbarApps />
      </div>
      <Icon w={13} h={8} className="ml-auto" sw={1.8}>
        <path d="M0.500 7l6-6 6 6" />
      </Icon>
      <svg width="20" height="14" viewBox="0 0 20 14" className="ml-6 shrink-0">
        <path d="M4 7q0-6 6-6.500Q15 1 16 5l-8 4z" fill="#8d9091" />
        <path d="M4 13q-4 0-4-4t5-4.500l7 5L5 13z" fill="#c8c9ca" />
        <path d="M3.500 13.300L13 6q3-2 5.500 0.500 1.500 2 1.500 3.500-0.500 3.300-4 3.300z" fill="#fff" />
      </svg>
      <Icon w={14} h={20} className="ml-[23px] text-[#7fcdd5]" sw={1.5}>
        <rect x="3.500" y="0.700" width="7" height="12.500" rx="3.500" />
        <path d="M0.700 10q0.500 6 6.300 6t6.300-6M7 16v3.300" />
      </Icon>
      <div className="ml-[26px] w-[30px] text-center text-[15px] leading-5 tracking-[-0.3px]">
        <div>ENG</div>
        <div>IN</div>
      </div>
      <Icon w={20} h={15} className="ml-[22px]" sw={1.5}>
        <path d="M0.700 5.500q9.300-9.500 18.600 0M3.500 8.300q6.500-6.500 13 0M6.200 11q3.800-3.600 7.600 0" />
        <circle cx="10" cy="13.300" r="1.300" fill="currentColor" stroke="none" />
      </Icon>
      <Icon w={21} h={18} className="ml-2.5" sw={1.4}>
        <path d="M0.700 5.500h3.500L9 1v15.500l-4.800-4.500H0.700zM12 6q2 3 0 6M14.500 3.500q3.500 5.500 0 11M17.200 1q5 8 0 16" />
      </Icon>
      <Icon w={20} h={16} className="ml-[9px]" sw={1.5}>
        <path d="M8 3h8q1.500 0 1.500 1.500v8.500q0 1.500-1.500 1.500H3q-1.500 0-1.500-1.500V9" />
        <path d="M18 6.500h1.300v4H18z" fill="currentColor" />
        <path d="M10 5.500h5v6.500H4.500z" fill="currentColor" />
        <path d="M3.500-1L0.500 5h3v4l4.500-6H5z" fill="currentColor" strokeWidth="0.700" />
      </Icon>
      <div className="mb-0.5 ml-4 flex w-[82px] flex-col items-end text-[15px] leading-5 tracking-[-0.05px] whitespace-nowrap">
        <div>00:14</div>
        <div>02-05-2024</div>
      </div>
      <svg width="17" height="20" viewBox="0 0 17 20" className="mr-[26px] ml-[11px] shrink-0">
        <path d="M8.500 0.500Q14.500 1 14.500 7v4.500l2 3.500v1H0.500v-1l2-3.500V7Q2.500 1 8.500 0.500zM5.800 17h5.400q-0.500 2.300-2.700 2.300T5.800 17z" fill="#98e6ec" />
      </svg>
    </footer>
  );
}

export default function App() {
  return (
    <div className="flex h-[1080px] w-[1920px] flex-col overflow-hidden bg-[#3b3b3b] font-['Open_Sans','Noto_Sans',sans-serif]">
      <TitleBar />
      <AddressBar />
      <div className="flex h-[932px] w-full">
        <main className="ml-[5px] flex h-[928px] w-[1860px] shrink-0 overflow-hidden rounded-[10px] bg-[#333] shadow-[0_0_3px_rgba(0,0,0,0.35)]">
          <div className="flex h-full w-[1841px] shrink-0 flex-col overflow-hidden">
            <PdfToolbar />
            <TicketPage />
          </div>
          <Scrollbar />
        </main>
        <Sidebar />
      </div>
      <Taskbar />
    </div>
  );
}
